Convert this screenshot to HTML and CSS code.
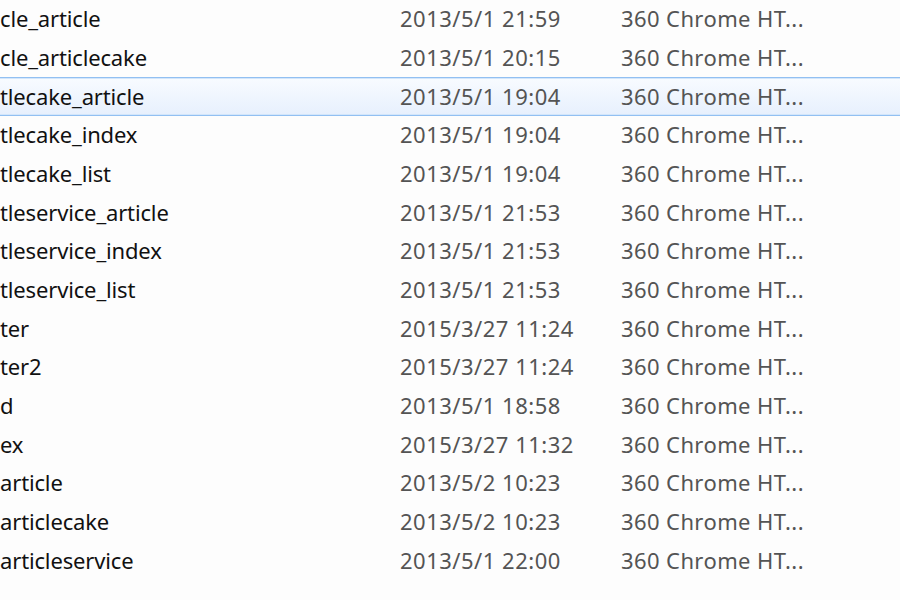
FILE: index.html
```html
<!DOCTYPE html>
<html lang="en">
<head>
    <meta charset="UTF-8">
    <title>Files</title>
    <link rel="stylesheet" href="styles.css">
</head>
<body>
    <div class="list">
        <div class="row"><span class="name">cle_article</span><span class="date">2013/5/1 21:59</span><span class="type">360 Chrome HT...</span></div>
        <div class="row"><span class="name">cle_articlecake</span><span class="date">2013/5/1 20:15</span><span class="type">360 Chrome HT...</span></div>
        <div class="row selected"><span class="name">tlecake_article</span><span class="date">2013/5/1 19:04</span><span class="type">360 Chrome HT...</span></div>
        <div class="row"><span class="name">tlecake_index</span><span class="date">2013/5/1 19:04</span><span class="type">360 Chrome HT...</span></div>
        <div class="row"><span class="name">tlecake_list</span><span class="date">2013/5/1 19:04</span><span class="type">360 Chrome HT...</span></div>
        <div class="row"><span class="name">tleservice_article</span><span class="date">2013/5/1 21:53</span><span class="type">360 Chrome HT...</span></div>
        <div class="row"><span class="name">tleservice_index</span><span class="date">2013/5/1 21:53</span><span class="type">360 Chrome HT...</span></div>
        <div class="row"><span class="name">tleservice_list</span><span class="date">2013/5/1 21:53</span><span class="type">360 Chrome HT...</span></div>
        <div class="row"><span class="name">ter</span><span class="date">2015/3/27 11:24</span><span class="type">360 Chrome HT...</span></div>
        <div class="row"><span class="name">ter2</span><span class="date">2015/3/27 11:24</span><span class="type">360 Chrome HT...</span></div>
        <div class="row"><span class="name">d</span><span class="date">2013/5/1 18:58</span><span class="type">360 Chrome HT...</span></div>
        <div class="row"><span class="name">ex</span><span class="date">2015/3/27 11:32</span><span class="type">360 Chrome HT...</span></div>
        <div class="row"><span class="name">article</span><span class="date">2013/5/2 10:23</span><span class="type">360 Chrome HT...</span></div>
        <div class="row"><span class="name">articlecake</span><span class="date">2013/5/2 10:23</span><span class="type">360 Chrome HT...</span></div>
        <div class="row"><span class="name">articleservice</span><span class="date">2013/5/1 22:00</span><span class="type">360 Chrome HT...</span></div>
    </div>
</body>
</html>
```

FILE: styles.css
```css
body {
    margin: 0;
    background: #fdfdfd;
    font-family: "Noto Sans", Arial, sans-serif;
    font-size: 22px;
    overflow: hidden;
}

.list {
    display: flex;
    flex-direction: column;
}

.row {
    display: flex;
    align-items: center;
    height: 38.67px;
    padding-bottom: 2px;
    box-sizing: border-box;
    white-space: nowrap;
}

.row.selected {
    border-top: 1px solid #92c0f2;
    border-bottom: 1px solid #92c0f2;
    box-shadow: inset 0 1px 0 #d3e6fb, inset 0 -1px 0 #d3e6fb;
    background: linear-gradient(#f8fbff, #e7f0fd);
}

.name {
    width: 400px;
    color: #111;
    letter-spacing: -0.15px;
}

.date {
    width: 221px;
    color: #545454;
    letter-spacing: 0.5px;
}

.type {
    color: #545454;
    letter-spacing: 0.4px;
}
```
